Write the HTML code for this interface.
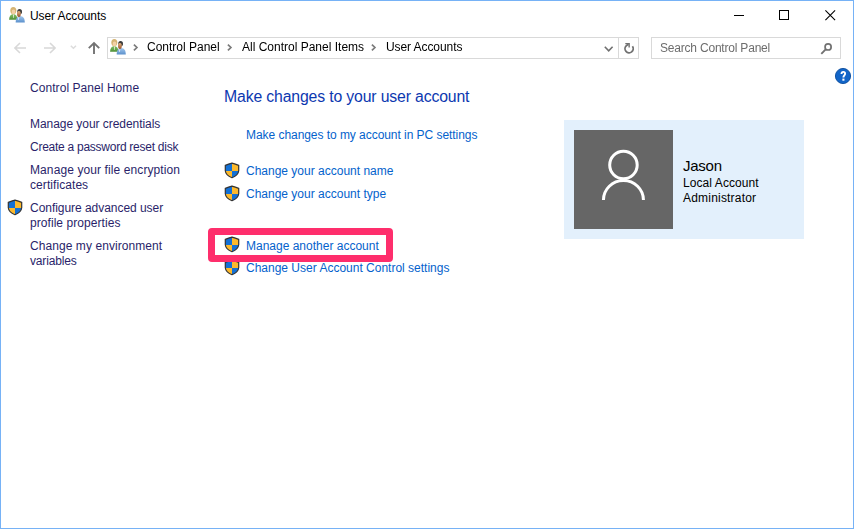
<!DOCTYPE html>
<html><head><meta charset="utf-8">
<style>
html,body{margin:0;padding:0;}
body{width:854px;height:529px;position:relative;overflow:hidden;background:#fff;font-family:"Liberation Sans",sans-serif;font-size:12px;}
.frame{position:absolute;left:0;top:0;width:852px;height:527px;border:1px solid #76b2f6;}
.t{position:absolute;white-space:nowrap;line-height:15px;}
.nav{color:#2a1f6a;}
.lnk{color:#0462cc;}
svg{position:absolute;overflow:visible;}
.ga{will-change:transform;}
.box{position:absolute;border:1px solid #d9d9d9;box-sizing:border-box;}
</style></head><body>
<div class="frame"></div>

<!-- title bar -->
<svg style="left:7px;top:5px" width="20" height="20" viewBox="0 0 20 20" id="ico1">
  <defs><linearGradient id="gw" x1="0" y1="0" x2="0" y2="1"><stop offset="0" stop-color="#84c064"/><stop offset="1" stop-color="#4d8e37"/></linearGradient><linearGradient id="gm" x1="0" y1="0" x2="0" y2="1"><stop offset="0" stop-color="#a2c8ee"/><stop offset="1" stop-color="#5b90cc"/></linearGradient><linearGradient id="gf" x1="0" y1="0" x2="0" y2="1"><stop offset="0" stop-color="#e6b884"/><stop offset="1" stop-color="#964f2c"/></linearGradient></defs>
  <g>
    <path d="M2.1 14.8 C2.1 11.2 3.9 9.3 6.3 9.1 C8.7 9.3 10.4 11.2 10.4 14.8 Z" fill="url(#gw)"/>
    <path d="M6.1 9.4 L7.0 9.4 L6.8 13 L6.3 13 Z" fill="#f2f2f2"/>
    <ellipse cx="6.3" cy="5.6" rx="3.0" ry="3.6" fill="#d5b473"/>
    <ellipse cx="6.5" cy="7.0" rx="1.8" ry="2.4" fill="#f2d0a6"/>
    <path d="M8.7 17.5 C8.7 13.2 10.4 11.1 13.2 11 C16.1 11.1 17.8 13.2 17.8 17.5 Z" fill="url(#gm)"/>
    <path d="M11.1 12.4 L12.2 12.4 L11.9 15 L11.4 15 Z" fill="#f4f4f4"/>
    <ellipse cx="12.6" cy="6.7" rx="2.4" ry="2.6" fill="#3b3b3b"/>
    <ellipse cx="11.9" cy="9.0" rx="1.9" ry="3.0" fill="url(#gf)"/>
  </g>
</svg>
<div class="t" style="left:30px;top:9px;letter-spacing:-0.1px;color:#000">User Accounts</div>

<!-- window controls -->
<div style="position:absolute;left:734px;top:15px;width:10px;height:1px;background:#000"></div>
<div style="position:absolute;left:779px;top:10px;width:10px;height:10px;border:1px solid #000;box-sizing:border-box"></div>
<svg style="left:825px;top:10px" width="11" height="11" viewBox="0 0 11 11"><path d="M0.4 0.4 L10.1 10.1 M10.1 0.4 L0.4 10.1" stroke="#000" stroke-width="1.1"/></svg>

<!-- nav buttons -->
<svg style="left:14px;top:42px" width="12" height="12" viewBox="0 0 12 12"><path d="M1 6 H12 M6 1 L0.9 6 L6 11" stroke="#d8d8d8" stroke-width="1.6" fill="none"/></svg>
<svg style="left:44px;top:42px" width="12" height="12" viewBox="0 0 12 12"><path d="M0 6 H11 M6 1 L11.1 6 L6 11" stroke="#d8d8d8" stroke-width="1.6" fill="none"/></svg>
<svg style="left:70px;top:45px" width="7" height="4" viewBox="0 0 7 4"><path d="M0.8 0.8 L3.4 3.3 L6.0 0.8" stroke="#dcdcdc" stroke-width="1.5" fill="none"/></svg>
<svg style="left:88px;top:42px" width="12" height="12" viewBox="0 0 12 12"><path d="M6 12 V1.2 M0.8 6.2 L6 1 L11.2 6.2" stroke="#737373" stroke-width="1.9" fill="none"/></svg>

<!-- address bar -->
<div class="box" style="left:107px;top:37px;width:532px;height:22px"></div>
<div style="position:absolute;left:618px;top:37px;width:1px;height:22px;background:#d9d9d9"></div>
<svg style="left:108px;top:37px" width="20" height="20" viewBox="0 0 20 20" id="ico2">
  <g>
    <path d="M2.1 14.8 C2.1 11.2 3.9 9.3 6.3 9.1 C8.7 9.3 10.4 11.2 10.4 14.8 Z" fill="url(#gw)"/>
    <path d="M6.1 9.4 L7.0 9.4 L6.8 13 L6.3 13 Z" fill="#f2f2f2"/>
    <ellipse cx="6.3" cy="5.6" rx="3.0" ry="3.6" fill="#d5b473"/>
    <ellipse cx="6.5" cy="7.0" rx="1.8" ry="2.4" fill="#f2d0a6"/>
    <path d="M8.7 17.5 C8.7 13.2 10.4 11.1 13.2 11 C16.1 11.1 17.8 13.2 17.8 17.5 Z" fill="url(#gm)"/>
    <path d="M11.1 12.4 L12.2 12.4 L11.9 15 L11.4 15 Z" fill="#f4f4f4"/>
    <ellipse cx="12.6" cy="6.7" rx="2.4" ry="2.6" fill="#3b3b3b"/>
    <ellipse cx="11.9" cy="9.0" rx="1.9" ry="3.0" fill="url(#gf)"/>
  </g>
</svg>
<svg style="left:133px;top:44px" width="5" height="7" viewBox="0 0 5 7"><path d="M0.9 0.7 L3.9 3.5 L0.9 6.3" stroke="#7b7b7b" stroke-width="1.7" fill="none"/></svg>
<div class="t ga" style="left:147px;top:40px;color:#000">Control Panel</div>
<svg style="left:227px;top:44px" width="5" height="7" viewBox="0 0 5 7"><path d="M0.9 0.7 L3.9 3.5 L0.9 6.3" stroke="#7b7b7b" stroke-width="1.7" fill="none"/></svg>
<div class="t ga" style="left:242px;top:40px;color:#000">All Control Panel Items</div>
<svg style="left:371px;top:44px" width="5" height="7" viewBox="0 0 5 7"><path d="M0.9 0.7 L3.9 3.5 L0.9 6.3" stroke="#7b7b7b" stroke-width="1.7" fill="none"/></svg>
<div class="t ga" style="left:386px;top:40px;letter-spacing:-0.08px;color:#000">User Accounts</div>
<svg style="left:604px;top:46px" width="10" height="6" viewBox="0 0 10 6"><path d="M0.8 0.8 L4.7 4.8 L8.6 0.8" stroke="#707070" stroke-width="1.6" fill="none"/></svg>
<svg style="left:620px;top:40px" width="18" height="16" viewBox="0 0 18 16"><path d="M12.46 6.35 A4.1 4.1 0 1 1 6.2 5.8 L8.5 4.2" stroke="#717171" stroke-width="1.8" fill="none"/><path d="M5.3 3.6 H9.15 V7.4" stroke="#717171" stroke-width="1.4" fill="none"/></svg>

<!-- search -->
<div class="box" style="left:651px;top:37px;width:190px;height:22px"></div>
<div class="t ga" style="left:660px;top:41px;letter-spacing:-0.2px;color:#6d6d6d">Search Control Panel</div>
<svg style="left:816px;top:40px" width="20" height="18" viewBox="0 0 20 18"><circle cx="12.1" cy="6.95" r="3.05" stroke="#717171" stroke-width="1.7" fill="none"/><path d="M9.9 9.2 L5.3 13.8" stroke="#717171" stroke-width="1.9"/></svg>

<!-- help -->
<svg style="left:835px;top:68px" width="16" height="16" viewBox="0 0 16 16"><circle cx="8" cy="8" r="7.6" fill="#1265c8" stroke="#0a4c9c" stroke-width="0.9"/><path d="M6.5 6.1 C6.5 4.6 7.3 3.9 8.3 3.9 C9.4 3.9 10.1 4.6 10.1 5.7 C10.1 7.2 8.4 7.5 8.4 9.4" stroke="#fff" stroke-width="1.9" fill="none"/><rect x="7.35" y="10.6" width="2.1" height="2.1" fill="#fff"/></svg>

<!-- left nav -->
<div class="t nav" style="left:30px;top:81px;letter-spacing:0.06px">Control Panel Home</div>
<div class="t nav" style="left:30px;top:117px;letter-spacing:-0.05px">Manage your credentials</div>
<div class="t nav" style="left:30px;top:140px;letter-spacing:-0.26px">Create a password reset disk</div>
<div class="t nav" style="left:30px;top:163px;letter-spacing:0.1px">Manage your file encryption</div>
<div class="t nav" style="left:30px;top:178px;letter-spacing:0.07px">certificates</div>
<div class="t nav" style="left:30px;top:201px;letter-spacing:-0.04px">Configure advanced user</div>
<div class="t nav" style="left:30px;top:216px;letter-spacing:0.06px">profile properties</div>
<div class="t nav" style="left:30px;top:239px;letter-spacing:0.07px">Change my environment</div>
<div class="t nav" style="left:30px;top:254px;letter-spacing:-0.15px">variables</div>

<!-- heading -->
<div class="t" style="left:224px;top:88px;font-size:15.8px;letter-spacing:-0.15px;line-height:18px;color:#0c38b0">Make changes to your user account</div>

<div class="t lnk" style="left:246px;top:128px;letter-spacing:-0.05px">Make changes to my account in PC settings</div>
<div class="t lnk" style="left:246px;top:164px">Change your account name</div>
<div class="t lnk" style="left:246px;top:187px">Change your account type</div>
<div class="t lnk" style="left:246px;top:239px">Manage another account</div>
<div class="t lnk" style="left:246px;top:261px">Change User Account Control settings</div>

<!-- shields -->
<svg style="left:5px;top:197px" width="20" height="20" viewBox="0 0 20 20"><use href="#shield"/></svg>
<svg style="left:222px;top:160px" width="20" height="20" viewBox="0 0 20 20"><use href="#shield"/></svg>
<svg style="left:222px;top:183px" width="20" height="20" viewBox="0 0 20 20"><use href="#shield"/></svg>
<svg style="left:222px;top:234px" width="20" height="20" viewBox="0 0 20 20"><use href="#shield"/></svg>
<svg style="left:222px;top:257px" width="20" height="20" viewBox="0 0 20 20"><use href="#shield"/></svg>
<svg width="0" height="0" style="position:absolute;left:0;top:0">
  <defs>
    <clipPath id="shc"><path d="M10 3.1 Q6.6 4.1 3.3 5.4 L3.3 10.8 Q3.7 15.3 10 17.7 Q16.3 15.3 16.7 10.8 L16.7 5.4 Q13.4 4.1 10 3.1 Z"/></clipPath>
    <g id="shield">
      <g clip-path="url(#shc)">
        <rect x="0" y="0" width="10" height="11" fill="#1270d6"/>
        <rect x="10" y="0" width="10" height="11" fill="#fcb92c"/>
        <rect x="0" y="11" width="10" height="9" fill="#fcb92c"/>
        <rect x="10" y="11" width="10" height="9" fill="#1270d6"/>
      </g>
      <path d="M10 3.1 Q6.6 4.1 3.3 5.4 L3.3 10.8 Q3.7 15.3 10 17.7 Q16.3 15.3 16.7 10.8 L16.7 5.4 Q13.4 4.1 10 3.1 Z" fill="none" stroke="#333" stroke-width="1.2"/>
    </g>
  </defs>
</svg>

<!-- red highlight -->
<div style="position:absolute;left:208px;top:228px;width:185px;height:34px;border:7px solid #fe2e6c;border-radius:4px;box-sizing:border-box"></div>

<!-- user tile -->
<div style="position:absolute;left:564px;top:120px;width:240px;height:119px;background:#e3f0fc"></div>
<div style="position:absolute;left:574px;top:130px;width:99px;height:99px;background:#666"></div>
<svg style="left:574px;top:130px" width="99" height="99" viewBox="0 0 99 99">
  <circle cx="49.45" cy="35" r="13.75" stroke="#fff" stroke-width="3" fill="none"/>
  <path d="M29.45 70 A20 19.5 0 0 1 69.45 70" stroke="#fff" stroke-width="3" fill="none"/>
</svg>
<div class="t" style="left:683px;top:157px;font-size:15px;letter-spacing:-0.25px;line-height:18px;color:#000">Jason</div>
<div class="t" style="left:683px;top:176px;letter-spacing:0.08px;color:#000">Local Account</div>
<div class="t" style="left:683px;top:191px;letter-spacing:0.2px;color:#000">Administrator</div>

</body></html>
